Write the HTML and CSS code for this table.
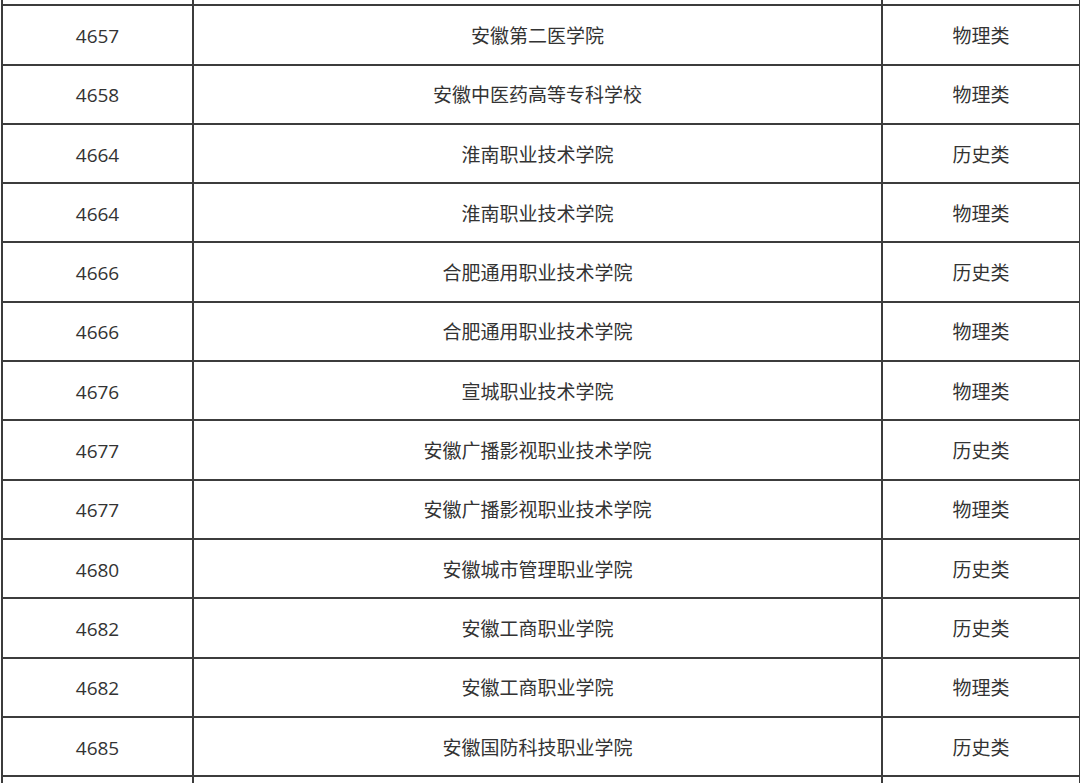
FILE: index.html
```html
<!DOCTYPE html>
<html lang="zh-CN">
<head>
<meta charset="utf-8">
<title>院校列表</title>
<link rel="stylesheet" href="styles.css">
</head>
<body>
<table class="list">
<colgroup><col class="c1"><col class="c2"><col class="c3"></colgroup>
<tbody>
<tr class="cut"><td></td><td></td><td></td></tr>
<tr><td>4657</td><td>安徽第二医学院</td><td>物理类</td></tr>
<tr><td>4658</td><td>安徽中医药高等专科学校</td><td>物理类</td></tr>
<tr><td>4664</td><td>淮南职业技术学院</td><td>历史类</td></tr>
<tr><td>4664</td><td>淮南职业技术学院</td><td>物理类</td></tr>
<tr><td>4666</td><td>合肥通用职业技术学院</td><td>历史类</td></tr>
<tr><td>4666</td><td>合肥通用职业技术学院</td><td>物理类</td></tr>
<tr><td>4676</td><td>宣城职业技术学院</td><td>物理类</td></tr>
<tr><td>4677</td><td>安徽广播影视职业技术学院</td><td>历史类</td></tr>
<tr><td>4677</td><td>安徽广播影视职业技术学院</td><td>物理类</td></tr>
<tr><td>4680</td><td>安徽城市管理职业学院</td><td>历史类</td></tr>
<tr><td>4682</td><td>安徽工商职业学院</td><td>历史类</td></tr>
<tr><td>4682</td><td>安徽工商职业学院</td><td>物理类</td></tr>
<tr><td>4685</td><td>安徽国防科技职业学院</td><td>历史类</td></tr>
<tr class="cut"><td></td><td></td><td></td></tr>
</tbody>
</table>
</body>
</html>
```
FILE: styles.css
```css
html, body {
  margin: 0;
  padding: 0;
  background: #ffffff;
  overflow: hidden;
}
body {
  font-family: "Open Sans", "Noto Sans CJK SC", sans-serif;
  color: #333333;
}
.list {
  border-collapse: collapse;
  width: 1078px;
  margin-left: 1px;
  margin-top: -55px;
  table-layout: fixed;
}
.c1 { width: 191px; }
.c2 { width: 689px; }
.c3 { width: 198px; }
.list td {
  border: 2px solid #3c3c3c;
  height: 55.3px;
  padding: 2px 0 0;
  text-align: center;
  vertical-align: middle;
  font-size: 19px;
  line-height: 24px;
}
```
